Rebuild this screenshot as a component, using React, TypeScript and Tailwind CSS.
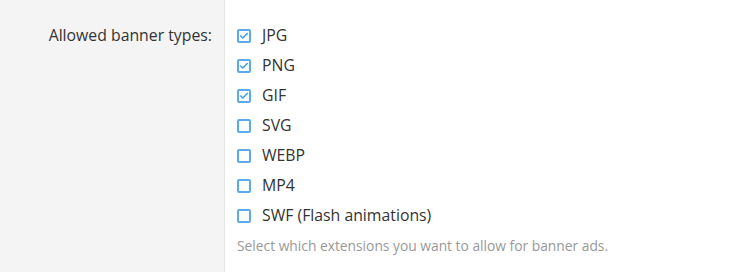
import { Check } from "lucide-react";

const types = [
  { label: "JPG", checked: true },
  { label: "PNG", checked: true },
  { label: "GIF", checked: true },
  { label: "SVG", checked: false },
  { label: "WEBP", checked: false },
  { label: "MP4", checked: false },
  { label: "SWF (Flash animations)", checked: false },
];

export default function App() {
  return (
    <div className="flex h-[272px] w-[730px] bg-white text-[#333] [font-family:'Open_Sans',sans-serif]">
      <div className="w-[225px] shrink-0 border-r border-[#e5e5e5] bg-[#f4f4f4] pr-[12px] pt-[24px] text-right text-[15.8px]">
        Allowed banner types:
      </div>
      <div className="flex flex-col pl-[12px] pt-[21px]">
        {types.map((t) => (
          <label key={t.label} className="flex h-[30px] items-center gap-[11px] text-[15.8px] text-[#333]">
            <span className="flex h-[14px] w-[14px] items-center justify-center rounded-[2px] border-2 border-[#5aaaf0] bg-white">
              {t.checked && <Check className="h-[10px] w-[10px] text-[#3d9be9]" strokeWidth={3.5} />}
            </span>
            {t.label}
          </label>
        ))}
        <p className="mt-[5px] text-[13.8px] text-[#999]">Select which extensions you want to allow for banner ads.</p>
      </div>
    </div>
  );
}
